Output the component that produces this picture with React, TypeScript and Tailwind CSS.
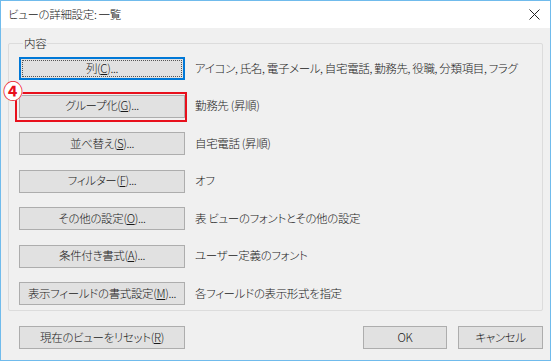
import React from "react";

type Row = {
  label: string;
  key: string;
  desc: string;
  focused?: boolean;
  marked?: boolean;
};

const rows: Row[] = [
  { label: "列(", key: "C", desc: "アイコン, 氏名, 電子メール, 自宅電話, 勤務先, 役職, 分類項目, フラグ", focused: true },
  { label: "グループ化(", key: "G", desc: "勤務先 (昇順)", marked: true },
  { label: "並べ替え(", key: "S", desc: "自宅電話 (昇順)" },
  { label: "フィルター(", key: "F", desc: "オフ" },
  { label: "その他の設定(", key: "O", desc: "表 ビューのフォントとその他の設定" },
  { label: "条件付き書式(", key: "A", desc: "ユーザー定義のフォント" },
  { label: "表示フィールドの書式設定(", key: "M", desc: "各フィールドの表示形式を指定" },
];

const WinButton = ({
  children,
  className = "",
  focused = false,
}: {
  children: React.ReactNode;
  className?: string;
  focused?: boolean;
}) => (
  <button
    className={
      focused
        ? `h-[23px] shrink-0 flex items-center justify-center bg-[#e1e1e1] border-2 border-[#0078d7] outline-1 outline-dotted outline-offset-[-4px] outline-[#555] leading-none ${className}`
        : `h-[23px] shrink-0 flex items-center justify-center bg-[#e1e1e1] border border-[#adadad] leading-none ${className}`
    }
  >
    {children}
  </button>
);

export default function App() {
  return (
    <div
      className="w-[551px] h-[361px] border border-[#70bbec] bg-[#f0f0f0] flex flex-col text-[#1a1a1a] text-[11.5px] font-light tracking-[-0.35px] [font-feature-settings:'palt']"
      style={{ fontFamily: '"Noto Sans CJK JP", "Noto Sans", sans-serif' }}
    >
      {/* title bar */}
      <div className="h-[27px] bg-white flex items-center justify-between pl-[7px] pr-[9px] shrink-0">
        <span>ビューの詳細設定: 一覧</span>
        <svg width="11" height="11" viewBox="0 0 11 11" className="mr-[1px]">
          <path d="M0.5 0.5 L10.5 10.5 M10.5 0.5 L0.5 10.5" stroke="#222" strokeWidth="1" />
        </svg>
      </div>

      {/* 内容 group */}
      <div className="mx-[7px] mt-[15px] border border-[#dcdcdc] rounded-[2px] pl-[10px] pb-[5px]">
        <div className="-mt-[9px] ml-[4px] w-fit px-[1px] bg-[#f0f0f0] leading-[16px]">内容</div>
        <div className="mt-[6px] flex flex-col gap-[14.5px]">
          {rows.map((r) => (
            <div key={r.key} className="flex items-center gap-[10px]">
              <div className="relative">
                <WinButton className="w-[166px]" focused={r.focused}>
                  {r.label}
                  <span className="underline underline-offset-1">{r.key}</span>
                  )...
                </WinButton>
                {r.marked && (
                  <>
                    <div className="absolute -left-[4px] -top-[3px] -right-[2px] -bottom-[4px] border-2 border-[#e8101c]" />
                    <div className="absolute -left-[16px] -top-[14px] w-[20px] h-[20px] rounded-full bg-white flex items-center justify-center text-[#e8101c] text-[20px] font-bold leading-none tracking-normal">
                      ④
                    </div>
                  </>
                )}
              </div>
              <span className="whitespace-nowrap">{r.desc}</span>
            </div>
          ))}
        </div>
      </div>

      {/* bottom buttons */}
      <div className="mt-[15px] flex items-center pl-[18px] pr-[7px]">
        <WinButton className="w-[166px]">
          現在のビューをリセット(<span className="underline underline-offset-1">R</span>)
        </WinButton>
        <div className="ml-auto flex gap-[11px]">
          <WinButton className="w-[84px]">OK</WinButton>
          <WinButton className="w-[85px]">キャンセル</WinButton>
        </div>
      </div>
    </div>
  );
}
